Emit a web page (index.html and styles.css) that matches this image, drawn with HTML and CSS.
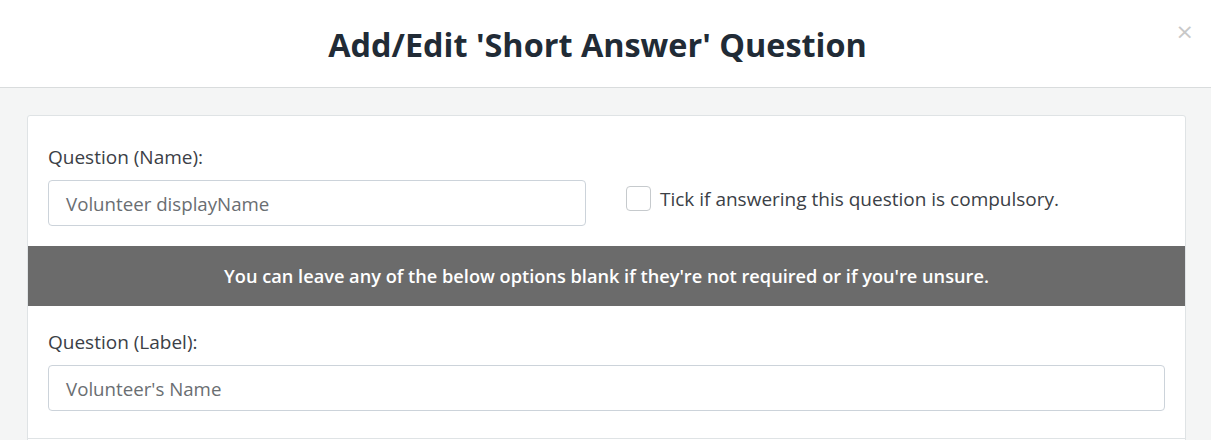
FILE: index.html
```html
<!DOCTYPE html>
<html>
<head>
<meta charset="utf-8">
<link rel="stylesheet" href="styles.css">
</head>
<body>
<div class="modal">
  <header class="modal-header">
    <h1 class="modal-title">Add/Edit 'Short Answer' Question</h1>
    <span class="close">&times;</span>
  </header>
  <div class="modal-body">
    <div class="card">
      <div class="section section-first">
        <div class="row">
          <div class="field">
            <label class="label">Question (Name):</label>
            <div class="input">Volunteer displayName</div>
          </div>
          <div class="check">
            <span class="box"></span>
            <span class="check-text">Tick if answering this question is compulsory.</span>
          </div>
        </div>
      </div>
      <div class="banner">You can leave any of the below options blank if they're not required or if you're unsure.</div>
      <div class="section section-bordered">
        <label class="label">Question (Label):</label>
        <div class="input">Volunteer's Name</div>
      </div>
      <div class="section"></div>
    </div>
  </div>
</div>
</body>
</html>
```

FILE: styles.css
```css
* { box-sizing: border-box; }
html, body { margin: 0; padding: 0; }
body {
  font-family: "Open Sans", "Liberation Sans", sans-serif;
  background: #f4f5f5;
  color: #3b4046;
  height: 440px;
  overflow: hidden;
}
.modal-header {
  position: relative;
  height: 88px;
  background: #ffffff;
  border-bottom: 1px solid #d9dcdd;
  display: flex;
  align-items: center;
  justify-content: center;
  padding-right: 16px;
}
.modal-title {
  margin: 0;
  font-size: 32.4px;
  font-weight: 700;
  color: #212b36;
  line-height: 1;
  padding-top: 2px;
}
.close {
  position: absolute;
  right: 17px;
  top: 17px;
  font-size: 22px;
  line-height: 30px;
  color: #c8c8c8;
  font-family: "DejaVu Sans", sans-serif;
}
.modal-body {
  padding: 27px 25px 0 27px;
}
.card {
  background: #ffffff;
  border: 1px solid #dfe3e5;
  border-radius: 3px;
}
.section {
  padding: 23px 20px 20px 20px;
}
.section-first {
  padding-top: 28px;
}
.section-bordered {
  border-bottom: 1px solid #dfe3e5;
  padding-bottom: 27px;
}
.row {
  display: flex;
  align-items: flex-end;
}
.field { width: 538px; }
.label {
  display: block;
  font-size: 19px;
  line-height: 26px;
  color: #3b4046;
  margin-bottom: 10px;
}
.input {
  height: 46px;
  border: 1px solid #ccd3da;
  border-radius: 4px;
  padding: 0 17px;
  display: flex;
  align-items: center;
  font-size: 18.7px;
  color: #6a6e72;
}
.check {
  display: flex;
  align-items: center;
  margin-left: 40px;
  height: 46px;
  padding-bottom: 9px;
}
.box {
  width: 25px;
  height: 25px;
  border: 1px solid #c6cacd;
  border-radius: 4px;
  background: #fff;
  margin-right: 9px;
}
.check-text {
  font-size: 19px;
  color: #3b4046;
}
.banner {
  background: #6b6b6b;
  color: #ffffff;
  height: 60px;
  display: flex;
  align-items: center;
  justify-content: center;
  font-size: 18.2px;
  font-weight: 600;
}
```
